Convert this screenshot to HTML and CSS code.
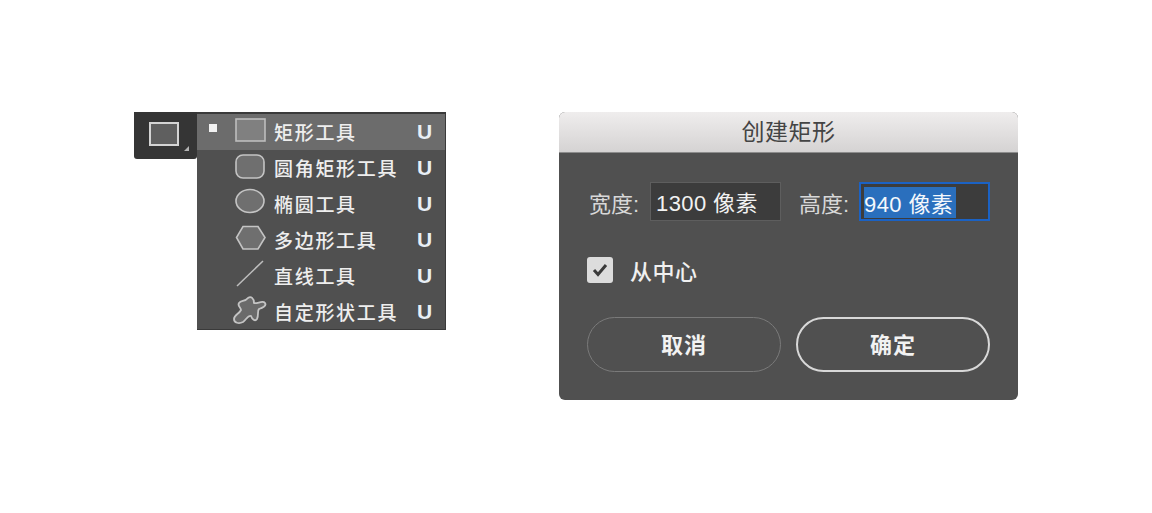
FILE: index.html
```html
<!DOCTYPE html>
<html lang="zh">
<head>
<meta charset="utf-8">
<title>创建矩形</title>
<link rel="stylesheet" href="styles.css">
</head>
<body>
<main class="stage">
  <section class="tools">
    <div class="tool-button">
      <svg class="tool-icon" width="32" height="26" viewBox="0 0 32 26"><rect x="2" y="2" width="28" height="22" fill="#5f5f5f" stroke="#d4d4d4" stroke-width="2"/></svg>
      <span class="corner"></span>
    </div>
    <ul class="menu">
      <li class="row active">
        <span class="bullet"></span>
        <svg class="ico" width="34" height="28" viewBox="0 0 34 28"><rect x="3" y="3" width="29" height="22" fill="#808080" stroke="#bdbdbd" stroke-width="1.6"/></svg>
        <span class="label">矩形工具</span><span class="key">U</span>
      </li>
      <li class="row">
        <span class="bullet none"></span>
        <svg class="ico" width="34" height="28" viewBox="0 0 34 28"><rect x="3" y="3" width="28" height="23" rx="7" fill="#6f6f6f" stroke="#c4c4c4" stroke-width="1.6"/></svg>
        <span class="label">圆角矩形工具</span><span class="key">U</span>
      </li>
      <li class="row">
        <span class="bullet none"></span>
        <svg class="ico" width="34" height="28" viewBox="0 0 34 28"><ellipse cx="17" cy="13" rx="14" ry="11.5" fill="#6f6f6f" stroke="#c4c4c4" stroke-width="1.6"/></svg>
        <span class="label">椭圆工具</span><span class="key">U</span>
      </li>
      <li class="row">
        <span class="bullet none"></span>
        <svg class="ico" width="34" height="28" viewBox="0 0 34 28"><path d="M10 2.500H25L32 13.500L25 25H10L3.500 13.500Z" fill="#6f6f6f" stroke="#c4c4c4" stroke-width="1.600"/></svg>
        <span class="label">多边形工具</span><span class="key">U</span>
      </li>
      <li class="row">
        <span class="bullet none"></span>
        <svg class="ico" width="34" height="28" viewBox="0 0 34 28"><path d="M4 26L30 1" fill="none" stroke="#bdbdbd" stroke-width="1.500"/></svg>
        <span class="label">直线工具</span><span class="key">U</span>
      </li>
      <li class="row">
        <span class="bullet none"></span>
        <svg class="ico wide" width="36" height="30" viewBox="0 0 36 30"><path d="M16 3C19 1 22 3 22 8C25 9 31 5 33 8C35 11 30 13 27 14C25 16 27 20 25 24C23 27 20 24 19 21C16 20 14 25 11 27C7 29 2 28 2 24C2 20 7 19 9 15C9 12 5 11 7 8C9 5 13 7 16 3Z" fill="#6a6a6a" stroke="#c4c4c4" stroke-width="1.800"/></svg>
        <span class="label">自定形状工具</span><span class="key">U</span>
      </li>
    </ul>
  </section>

  <section class="dialog">
    <header class="title">创建矩形</header>
    <div class="body">
      <div class="fields">
        <label class="field-label">宽度:</label>
        <div class="input">1300 像素</div>
        <label class="field-label second">高度:</label>
        <div class="input focus"><span class="selected">940 像素</span></div>
      </div>
      <div class="check-row">
        <span class="check"><svg width="18" height="16" viewBox="0 0 18 16"><path d="M3 8L7 12.500L15 3" fill="none" stroke="#3a3a3a" stroke-width="3"/></svg></span>
        <span class="check-label">从中心</span>
      </div>
      <div class="buttons">
        <button class="btn">取消</button>
        <button class="btn primary">确定</button>
      </div>
    </div>
  </section>
</main>
</body>
</html>
```
FILE: styles.css
```css
* { box-sizing: border-box; }
html, body { margin: 0; padding: 0; background: #fff; }
body {
  width: 1152px;
  height: 513px;
  overflow: hidden;
  font-family: "Liberation Sans", "Noto Sans CJK SC", sans-serif;
}
.stage {
  display: flex;
  align-items: flex-start;
  padding: 112px 0 0 134px;
}
.tools { display: flex; align-items: flex-start; }
.tool-button {
  position: relative;
  width: 63px;
  height: 47px;
  background: #353535;
  border-radius: 0 0 3px 3px;
  display: flex;
  align-items: center;
  padding-left: 14px;
}
.tool-icon { display: block; margin-top: -3px; }
.corner {
  position: absolute;
  right: 8px;
  bottom: 8px;
  width: 0;
  height: 0;
  border-left: 5px solid transparent;
  border-bottom: 5px solid #b4b4b4;
}
.menu {
  list-style: none;
  margin: 0;
  padding: 0;
  width: 249px;
  height: 218px;
  background: #505050;
  border: 1px solid #3a3a3a;
  border-top: 2px solid #3a3a3a;
  border-left: 0;
}
.row {
  display: flex;
  align-items: center;
  height: 36px;
  padding-left: 12px;
  color: #eee;
}
.row.active { background: #6c6c6c; }
.bullet {
  width: 8px;
  height: 8px;
  background: #f2f2f2;
  margin-right: 21px;
  margin-top: -8px;
  flex: none;
}
.bullet.none { background: transparent; }
.ico { display: block; flex: none; margin: -4px 7px 0 -5px; }
.ico.wide { margin: -4px 6px 0 -6px; }
.label {
  font-size: 19px;
  font-weight: 500;
  letter-spacing: 1.700px;
  white-space: nowrap;
  flex: 1;
  margin-top: -2px;
}
.key {
  font-size: 21px;
  font-weight: 700;
  width: 28px;
  margin-left: -1px;
  color: #e8eef5;
}
.dialog {
  width: 459px;
  height: 288px;
  margin-left: 113px;
  background: #505050;
  border-radius: 6px;
  overflow: hidden;
  display: flex;
  flex-direction: column;
}
.title {
  height: 41px;
  background: linear-gradient(#efeded, #d5d3d3);
  border-bottom: 1px solid #8c8c8c;
  color: #444;
  font-size: 23px;
  text-align: center;
  line-height: 41px;
  letter-spacing: 0.500px;
}
.body { padding: 29px 28px 0; }
.fields { display: flex; align-items: center; }
.field-label {
  color: #d8d8d8;
  font-size: 22px;
  padding: 0 0 0 2px;
  width: 63px;
  flex: none;
}
.field-label.second { width: 61px; margin-left: 17px; padding-left: 1px; }
.input {
  width: 131px;
  height: 39px;
  background: #3c3c3c;
  border: 1px solid #5e5e5e;
  color: #f2f2f2;
  font-size: 22px;
  letter-spacing: 0.400px;
  line-height: 42px;
  padding-left: 5px;
  white-space: nowrap;
}
.input.focus {
  border: 2px solid #1b62c4;
  padding: 3px 0 0 3px;
  line-height: 35px;
}
.selected {
  display: block;
  width: 92px;
  height: 31px;
  background: #2a6fbd;
  color: #f4f8fc;
  overflow: hidden;
}
.check-row {
  display: flex;
  align-items: center;
  margin-top: 33px;
}
.check {
  width: 26px;
  height: 26px;
  border-radius: 3px;
  background: #dcdcdc;
  display: flex;
  align-items: center;
  justify-content: center;
}
.check-label {
  color: #f0f0f0;
  font-size: 22px;
  font-weight: 500;
  letter-spacing: 0.500px;
  margin-left: 17px;
}
.buttons {
  display: flex;
  gap: 15px;
  margin-top: 31px;
}
.btn {
  width: 194px;
  height: 55px;
  border-radius: 28px;
  background: transparent;
  border: 1px solid #7a7a7a;
  color: #f2f2f2;
  font: 700 22px "Liberation Sans", "Noto Sans CJK SC", sans-serif;
  letter-spacing: 1px;
  padding: 0 0 4px;
}
.btn.primary { border: 2px solid #d8d8d8; }
```
